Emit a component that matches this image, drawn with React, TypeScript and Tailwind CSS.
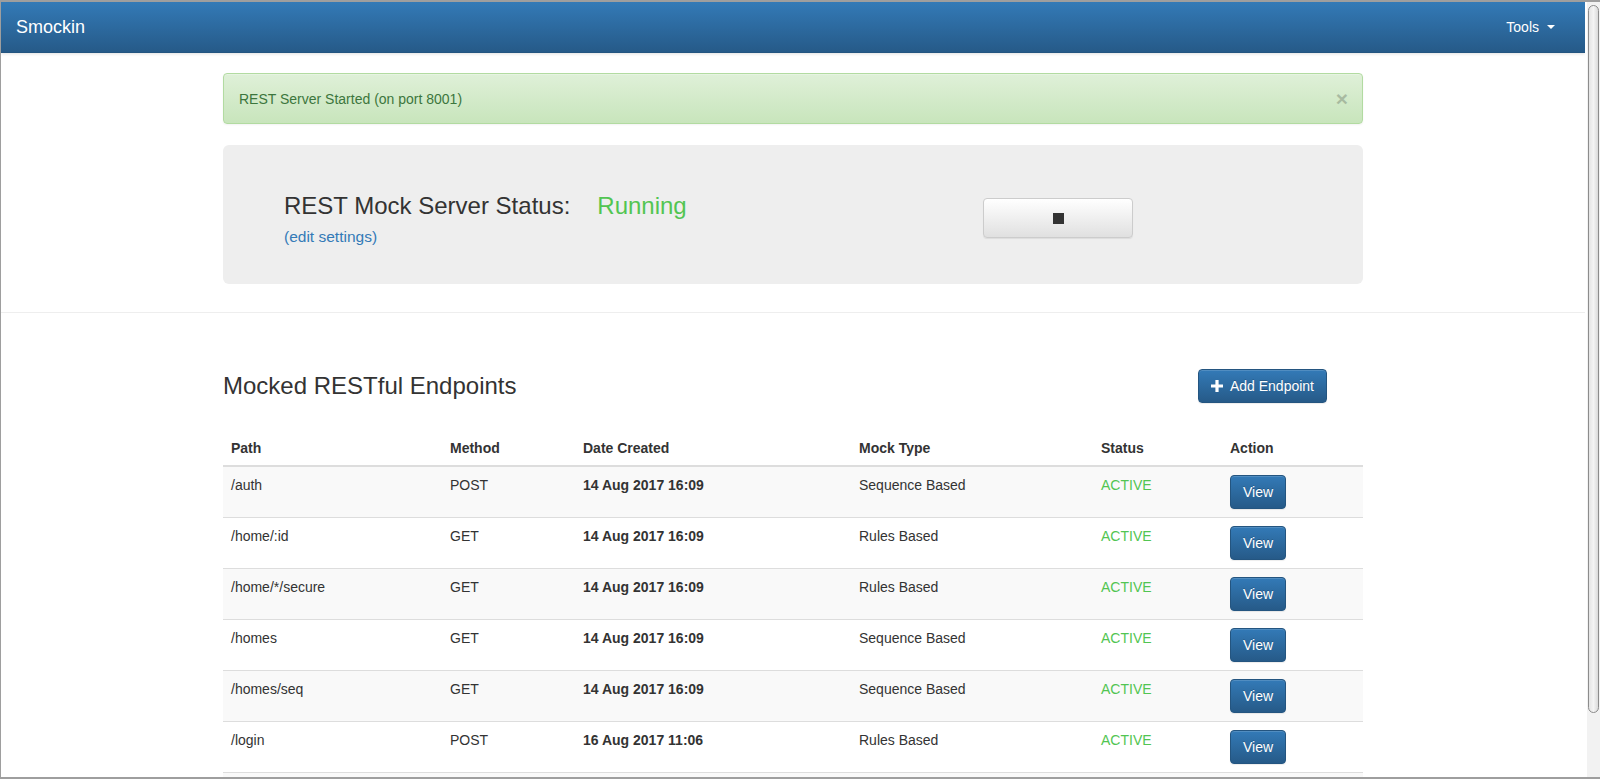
import { useState } from 'react';

interface Endpoint {
  path: string;
  method: string;
  created: string;
  mockType: string;
  status: string;
}

const endpoints: Endpoint[] = [
  { path: '/auth', method: 'POST', created: '14 Aug 2017 16:09', mockType: 'Sequence Based', status: 'ACTIVE' },
  { path: '/home/:id', method: 'GET', created: '14 Aug 2017 16:09', mockType: 'Rules Based', status: 'ACTIVE' },
  { path: '/home/*/secure', method: 'GET', created: '14 Aug 2017 16:09', mockType: 'Rules Based', status: 'ACTIVE' },
  { path: '/homes', method: 'GET', created: '14 Aug 2017 16:09', mockType: 'Sequence Based', status: 'ACTIVE' },
  { path: '/homes/seq', method: 'GET', created: '14 Aug 2017 16:09', mockType: 'Sequence Based', status: 'ACTIVE' },
  { path: '/login', method: 'POST', created: '16 Aug 2017 11:06', mockType: 'Rules Based', status: 'ACTIVE' },
];

const primaryBtn =
  'rounded-[4px] border border-[#245580] bg-[linear-gradient(to_bottom,#337ab7_0,#265a88_100%)] text-white text-[14px] leading-5 [text-shadow:0_-1px_0_rgba(0,0,0,0.2)] shadow-[inset_0_1px_0_rgba(255,255,255,0.15),0_1px_1px_rgba(0,0,0,0.075)]';

const PlusIcon = () => (
  <svg width="12" height="12" viewBox="0 0 12 12" className="inline-block">
    <path d="M4.4 0h3.2v4.4H12v3.2H7.6V12H4.4V7.6H0V4.4h4.4z" fill="currentColor" />
  </svg>
);

const Navbar = () => (
  <div className="h-[51px] shrink-0 flex items-center justify-between border-b border-[#245580] bg-[linear-gradient(to_bottom,#337ab7_0,#265a88_100%)] shadow-[0_1px_3px_rgba(0,0,0,0.12)]">
    <span className="pl-[15px] text-[18px] leading-5 text-white">Smockin</span>
    <span className="pr-[30px] text-[14px] leading-5 text-white flex items-center">
      Tools
      <span className="ml-[8px] w-0 h-0 border-t-[4px] border-t-white border-x-[4px] border-x-transparent" />
    </span>
  </div>
);

const Scrollbar = () => (
  <div className="w-[15px] shrink-0 bg-[#f2f2f2] border-l-2 border-white pl-[1px] pr-[1px] pt-[3px]">
    <div className="h-[708px] rounded-[6px] border border-[#8c8c8c] bg-[linear-gradient(to_right,#e4e4e4,#f4f4f4_50%,#dadada)]" />
  </div>
);

export default function App() {
  const [showAlert, setShowAlert] = useState(true);

  return (
    <div className="w-[1600px] h-[779px] overflow-hidden flex border-t-2 border-b-2 border-l border-[#9e9e9e] bg-white text-[#333] font-['Liberation_Sans',Arial,sans-serif]">
      <div className="flex-1 flex flex-col overflow-hidden">
        <Navbar />

        <div className="w-[1140px] mx-auto pt-[20px]">
          {showAlert && (
            <div className="h-[51px] mb-[21px] flex items-center justify-between pl-[15px] pr-[14px] rounded-[4px] border border-[#b2dba1] bg-[linear-gradient(to_bottom,#dff0d8_0,#c8e5bc_100%)] text-[#3c763d] text-[14px] leading-5 shadow-[inset_0_1px_0_rgba(255,255,255,0.25),0_1px_2px_rgba(0,0,0,0.05)]">
              <span>REST Server Started (on port 8001)</span>
              <button
                className="text-[21px] font-bold leading-none text-black opacity-20"
                onClick={() => setShowAlert(false)}
              >
                ×
              </button>
            </div>
          )}

          <div className="h-[139px] flex items-start rounded-[6px] bg-[#eee] pl-[61px]">
            <div className="w-[699px] pt-[48px]">
              <div className="text-[24px] leading-[26px]">
                REST Mock Server Status:
                <span className="ml-[27px] text-[#52c552]">Running</span>
              </div>
              <a className="block mt-[7px] text-[15.5px] leading-[22px] text-[#337ab7]" href="#">
                (edit settings)
              </a>
            </div>
            <button className="mt-[53px] w-[150px] h-[40px] flex items-center justify-center rounded-[4px] border border-[#ccc] bg-[linear-gradient(to_bottom,#fff_0,#e0e0e0_100%)] shadow-[inset_0_1px_0_rgba(255,255,255,0.15),0_1px_1px_rgba(0,0,0,0.075)]">
              <span className="w-[11px] h-[11px] bg-[#333]" />
            </button>
          </div>
        </div>

        <hr className="mt-[28px] border-0 border-t border-[#eee]" />

        <div className="w-[1140px] mx-auto pt-[56px]">
          <div className="h-[34px] flex items-center justify-between">
            <h3 className="text-[24px] leading-[26px] font-normal">Mocked RESTful Endpoints</h3>
            <button className={`${primaryBtn} mr-[36px] h-[34px] px-3 flex items-center gap-[7px]`}>
              <PlusIcon />
              Add Endpoint
            </button>
          </div>

          <table className="mt-[27px] w-full table-fixed border-collapse text-[14px] leading-5">
            <colgroup>
              <col className="w-[219px]" />
              <col className="w-[133px]" />
              <col className="w-[276px]" />
              <col className="w-[242px]" />
              <col className="w-[129px]" />
              <col className="w-[141px]" />
            </colgroup>
            <thead>
              <tr>
                {['Path', 'Method', 'Date Created', 'Mock Type', 'Status', 'Action'].map((h) => (
                  <th key={h} className="text-left font-bold px-2 pt-2 pb-[7px] border-b-2 border-[#ddd]">
                    {h}
                  </th>
                ))}
              </tr>
            </thead>
            <tbody>
              {endpoints.map((e, i) => (
                <tr key={e.path} className={`${i % 2 === 0 ? 'bg-[#f9f9f9]' : 'bg-white'} border-b border-[#ddd]`}>
                  <td className="p-2 align-top border-t border-[#ddd]">{e.path}</td>
                  <td className="p-2 align-top border-t border-[#ddd]">{e.method}</td>
                  <td className="p-2 align-top border-t border-[#ddd] font-bold">{e.created}</td>
                  <td className="p-2 align-top border-t border-[#ddd]">{e.mockType}</td>
                  <td className="p-2 align-top border-t border-[#ddd] text-[#52c552]">{e.status}</td>
                  <td className="p-2 align-top border-t border-[#ddd]">
                    <button className={`${primaryBtn} h-[34px] px-3`}>View</button>
                  </td>
                </tr>
              ))}
            </tbody>
          </table>
          <div className="h-[20px] bg-[#f9f9f9]" />
        </div>
      </div>
      <Scrollbar />
    </div>
  );
}
